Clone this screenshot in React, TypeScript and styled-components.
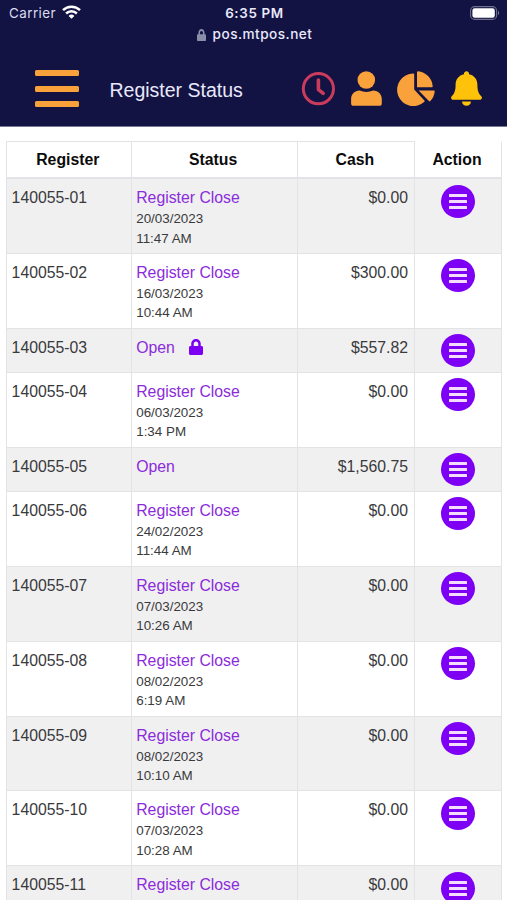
import React from 'react';
import styled, { createGlobalStyle } from 'styled-components';
import { FaLock } from 'react-icons/fa';

const GlobalStyle = createGlobalStyle`
  * { box-sizing: border-box; }
  html, body { margin: 0; padding: 0; background: #fff; }
  body { font-family: "Liberation Sans", Arial, sans-serif; color: #3a3a3c; }
`;

const Screen = styled.div`
  width: 507px;
  height: 900px;
  overflow: hidden;
  background: #fff;
`;

const Header = styled.header`
  height: 127px;
  background: #121243;
  border-bottom: 1px solid #77779a;
  color: #e9e9fb;
`;

const StatusBar = styled.div`
  display: grid;
  grid-template-columns: 1fr auto 1fr;
  height: 26px;
  padding: 0 7px 0 9px;
  align-items: center;
  font-family: Inter, sans-serif;
  font-size: 13.4px;
  line-height: 26px;
`;

const Carrier = styled.div`
  display: flex;
  align-items: center;
  gap: 6px;
  letter-spacing: 0.45px;
  color: #dcdcf0;
  svg { margin-top: -2px; }
`;

const Clock = styled.div`
  font-weight: 600;
  letter-spacing: 0.65px;
`;

const BatterySlot = styled.div`
  display: flex;
  justify-content: flex-end;
  margin-top: -1px;
`;

const AddressBar = styled.div`
  display: flex;
  align-items: center;
  justify-content: center;
  gap: 7px;
  height: 17px;
  padding-left: 2px;
  font-family: Inter, sans-serif;
  font-size: 13.6px;
  font-weight: 500;
  letter-spacing: 0.48px;
  line-height: 17px;
  svg { color: #8c8cab; width: 9px; height: 12px; }
`;

const Toolbar = styled.div`
  display: flex;
  align-items: center;
  height: 83px;
  padding: 8px 25px 0 35px;
`;

const MenuButton = styled.button`
  display: flex;
  flex-direction: column;
  justify-content: space-between;
  width: 43.5px;
  height: 37px;
  padding: 0;
  border: 0;
  background: none;
`;

const MenuBar = styled.span`
  height: 6px;
  border-radius: 1.5px;
  background: #f9a13a;
`;

const Title = styled.h1`
  margin: 3px 0 0 31px;
  font-size: 19.5px;
  line-height: 24px;
  font-weight: 400;
  white-space: nowrap;
`;

const Tools = styled.nav`
  display: flex;
  align-items: center;
  gap: 16px;
  margin-left: auto;
  svg { overflow: visible; }
`;

const Table = styled.main`
  width: 496px;
  margin: 14px 0 0 6px;
  border-left: 1px solid #e2e3e7;
  overflow: hidden;
`;

const Row = styled.div<{ $height: number; $striped?: boolean }>`
  display: grid;
  grid-template-columns: 124.6px 166px 117.4px 87px;
  height: ${(p) => p.$height}px;
  background: ${(p) => (p.$striped ? '#f0f0f1' : '#fff')};
`;

const HeadCell = styled.div<{ $open?: boolean }>`
  border-top: 1px solid ${(p) => (p.$open ? 'transparent' : '#e2e3e7')};
  border-right: 1px solid #e2e3e7;
  border-bottom: 2px solid #e2e3e7;
  padding: 9px 2px 0 0;
  text-align: center;
  font-size: 15.8px;
  line-height: 18px;
  font-weight: 700;
  color: #0b0b0b;
`;

const Cell = styled.div<{ $align?: string }>`
  border-right: 1px solid #e2e3e7;
  border-bottom: 1px solid #e2e3e7;
  padding: 9px 6px 0 4.6px;
  font-size: 15.8px;
  line-height: 20px;
  text-align: ${(p) => p.$align ?? 'left'};
`;

const StatusLink = styled.div`
  display: flex;
  align-items: center;
  height: 20px;
  gap: 13.5px;
  color: #8b2bdc;
  white-space: nowrap;
  svg { color: #7d00f5; margin-top: -1px; }
`;

const Stamp = styled.div`
  margin-top: 1px;
  font-size: 13.4px;
  line-height: 19.5px;
`;

const ActionCell = styled(Cell)`
  display: flex;
  justify-content: center;
  align-items: flex-start;
  padding: 5.5px 0 0;
`;

const ActionButton = styled.button`
  display: flex;
  flex-direction: column;
  align-items: center;
  justify-content: center;
  gap: 3px;
  width: 34px;
  height: 33px;
  padding: 0;
  border: 0;
  border-radius: 50%;
  background: #7d00f5;
`;

const ActionBar = styled.span`
  width: 18px;
  height: 3px;
  border-radius: 0.5px;
  background: #f3dcff;
`;

interface Register {
  id: string;
  cash: string;
  date?: string;
  time?: string;
  locked?: boolean;
}

const registers: Register[] = [
  { id: '140055-01', cash: '$0.00', date: '20/03/2023', time: '11:47 AM' },
  { id: '140055-02', cash: '$300.00', date: '16/03/2023', time: '10:44 AM' },
  { id: '140055-03', cash: '$557.82', locked: true },
  { id: '140055-04', cash: '$0.00', date: '06/03/2023', time: '1:34 PM' },
  { id: '140055-05', cash: '$1,560.75' },
  { id: '140055-06', cash: '$0.00', date: '24/02/2023', time: '11:44 AM' },
  { id: '140055-07', cash: '$0.00', date: '07/03/2023', time: '10:26 AM' },
  { id: '140055-08', cash: '$0.00', date: '08/02/2023', time: '6:19 AM' },
  { id: '140055-09', cash: '$0.00', date: '08/02/2023', time: '10:10 AM' },
  { id: '140055-10', cash: '$0.00', date: '07/03/2023', time: '10:28 AM' },
  { id: '140055-11', cash: '$0.00', date: '', time: '' },
];

const WifiIcon = () => (
  <svg width="19" height="14" viewBox="0 0 19 14" fill="none" stroke="#fff" strokeWidth="2.5">
    <path d="M1 5.2a12.2 12.2 0 0 1 17 0" />
    <path d="M4.1 8.5a7.8 7.8 0 0 1 10.8 0" />
    <path d="M9.5 13.8 6.6 10.9a4.1 4.1 0 0 1 5.8 0Z" fill="#fff" stroke="none" />
  </svg>
);

const BatteryIcon = () => (
  <svg width="30" height="14" viewBox="0 0 30 14">
    <rect x="0.6" y="0.6" width="26" height="12.8" rx="4" fill="none" stroke="#70708e" strokeWidth="1.1" />
    <rect x="2.4" y="2.3" width="22.4" height="9.4" rx="2.3" fill="#fff" />
    <path d="M28 4.8c1.5.5 1.5 3.9 0 4.4Z" fill="#70708e" />
  </svg>
);

const ClockIcon = () => (
  <svg width="34" height="35" viewBox="0 0 34 35" fill="none" stroke="#cb3b5c">
    <circle cx="17.4" cy="17.7" r="15.1" strokeWidth="3" />
    <path d="M17.4 9v9.600l4.800 3.800" strokeWidth="3.6" strokeLinecap="round" strokeLinejoin="round" />
  </svg>
);

const UserIcon = () => (
  <svg width="31" height="35" viewBox="0 0 31 35" fill="#f9a13a">
    <circle cx="15.3" cy="9" r="8.8" />
    <path d="M8.6 19.6c4.2 1.8 9.4 1.8 13.6 0 5 .2 8.6 3.8 8.6 8.6v4.2c0 1.4-.9 2.3-2.3 2.3H2.4C1 34.700.1 33.8.1 32.400v-4.200c0-4.800 3.500-8.400 8.500-8.600Z" />
  </svg>
);

const PieIcon = () => (
  <svg width="37" height="35" viewBox="0 0 37 35" fill="#f9a13a">
    <path d="M15.2 2.500c.6 0 1 .4 1 1v15l10.200 10.900c.4.4.4 1 0 1.400A16.300 16.300 0 1 1 15.200 2.500Z" />
    <path d="M19 1.200c0-.6.4-1 1-.9a16.200 16.200 0 0 1 14.700 14.900c.1.600-.4 1.100-1 1.100H19Z" />
    <path d="M20.600 19.500h15.200c.6 0 1 .5.900 1a16 16 0 0 1-4.400 9.600c-.4.4-1 .4-1.400 0Z" />
  </svg>
);

const BellIcon = () => (
  <svg width="31" height="35" viewBox="0 0 31 35" fill="#fec20a">
    <path d="M15.500.2c1.500 0 2.500 1 2.500 2.400v.7c5.300 1.100 8.400 5.200 8.400 10.300 0 6.400 1.200 9.200 3.900 11.600 1.300 1.300.4 3.500-1.600 3.500H2.300C.3 28.700-.6 26.500.7 25.200c2.700-2.400 3.900-5.200 3.900-11.600C4.600 8.500 7.700 4.400 13 3.300v-.7C13 1.200 14 .2 15.500.2Z" />
    <path d="M11 30.600h9c0 2.500-1.900 4.200-4.500 4.200S11 33.100 11 30.600Z" />
  </svg>
);

export default function App() {
  return (
    <Screen>
      <GlobalStyle />
      <Header>
        <StatusBar>
          <Carrier>
            Carrier
            <WifiIcon />
          </Carrier>
          <Clock>6:35 PM</Clock>
          <BatterySlot>
            <BatteryIcon />
          </BatterySlot>
        </StatusBar>
        <AddressBar>
          <FaLock preserveAspectRatio="none" />
          pos.mtpos.net
        </AddressBar>
        <Toolbar>
          <MenuButton aria-label="Menu">
            <MenuBar />
            <MenuBar />
            <MenuBar />
          </MenuButton>
          <Title>Register Status</Title>
          <Tools>
            <ClockIcon />
            <UserIcon />
            <PieIcon />
            <BellIcon />
          </Tools>
        </Toolbar>
      </Header>
      <Table>
        <Row $height={38}>
          <HeadCell>Register</HeadCell>
          <HeadCell>Status</HeadCell>
          <HeadCell>Cash</HeadCell>
          <HeadCell $open>Action</HeadCell>
        </Row>
        {registers.map((r, i) => {
          const closed = r.date !== undefined;
          return (
            <Row key={r.id} $height={closed ? 74.9 : 44.1} $striped={i % 2 === 0}>
              <Cell>{r.id}</Cell>
              <Cell>
                <StatusLink>
                  {closed ? 'Register Close' : 'Open'}
                  {r.locked && <FaLock size={16} />}
                </StatusLink>
                {r.date && (
                  <Stamp>
                    {r.date}
                    <br />
                    {r.time}
                  </Stamp>
                )}
              </Cell>
              <Cell $align="right">{r.cash}</Cell>
              <ActionCell>
                <ActionButton aria-label={`Actions for ${r.id}`}>
                  <ActionBar />
                  <ActionBar />
                  <ActionBar />
                </ActionButton>
              </ActionCell>
            </Row>
          );
        })}
      </Table>
    </Screen>
  );
}
